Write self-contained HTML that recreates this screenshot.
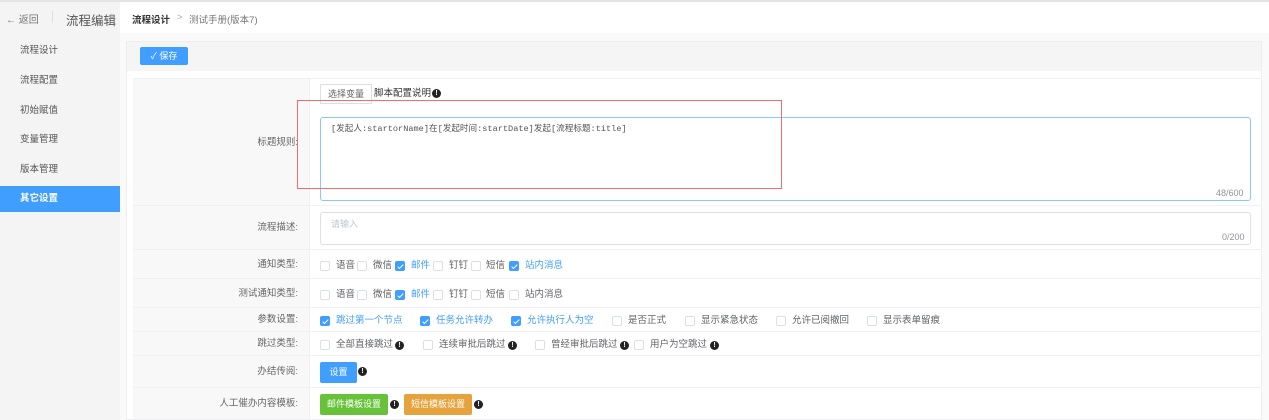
<!DOCTYPE html>
<html><head><meta charset="utf-8"><style>
*{box-sizing:border-box;margin:0;padding:0}
body{width:1269px;height:420px;overflow:hidden;background:#fff;font-family:"Liberation Sans","Noto Sans CJK SC",sans-serif;font-size:9.5px;color:#606266;position:relative}
.a{position:absolute}
.side{left:0;top:2px;width:120px;height:418px;background:#f4f4f4}
.nav{left:0;width:120px;height:26px;line-height:26px;padding-left:20px;color:#555;font-size:9.5px}
.lbl{left:133px;width:176px;text-align:right;padding-right:11px;font-size:9.5px;color:#666;background:#f8f8f8;border-bottom:1px solid #eef0f4}
.val{left:309px;width:953px;border-bottom:1px solid #eef0f4;border-left:1px solid #eef0f4}
.cb{width:10px;height:10px;border:1px solid #dcdfe6;border-radius:2px;background:#fff}
.cb.on{background:#409eff;border-color:#409eff}
.cb.on:after{content:"";position:absolute;left:3px;top:1px;width:2px;height:5px;border:solid #fff;border-width:0 1px 1px 0;transform:rotate(45deg)}
.t{font-size:9.5px;line-height:12px;color:#606266;white-space:nowrap}
.t.on{color:#409eff}
.ex{width:9px;height:9px;border-radius:50%;background:#222;color:#fff;font-size:7px;line-height:9px;text-align:center;font-weight:bold}
.btn{color:#fff;font-size:9px;text-align:center;border-radius:2px}
</style></head><body>
<div class="a" style="left:0;top:0;width:1269px;height:2px;background:#e4e4e4"></div>
<div class="a side"></div>
<div class="a" style="left:6px;top:11px;font-size:10px;color:#777">←&nbsp;返回</div>
<div class="a" style="left:52px;top:11px;width:1px;height:12px;background:#ddd"></div>
<div class="a" style="left:66px;top:10px;font-size:12.5px;color:#555">流程编辑</div>
<div class="a" style="left:120px;top:33px;width:1149px;height:387px;background:#fafafa"></div>
<div class="a" style="left:132px;top:12px;font-size:9.5px;color:#333;font-weight:bold">流程设计</div>
<div class="a" style="left:177px;top:12px;font-size:9.5px;color:#aaa">&gt;</div>
<div class="a" style="left:189px;top:12px;font-size:9.5px;color:#777">测试手册(版本7)</div>
<div class="a nav" style="top:38px">流程设计</div>
<div class="a nav" style="top:68px">流程配置</div>
<div class="a nav" style="top:98px">初始赋值</div>
<div class="a nav" style="top:127px">变量管理</div>
<div class="a nav" style="top:157px">版本管理</div>
<div class="a nav" style="top:186px;background:#409eff;color:#fff;font-weight:bold">其它设置</div>
<div class="a" style="left:126px;top:41px;width:1136px;height:379px;background:#fff;border:1px solid #eee"></div>
<div class="a" style="left:127px;top:42px;width:1134px;height:29px;background:#f5f5f5"></div>
<div class="a btn" style="left:140px;top:47px;width:48px;height:18px;line-height:18px;background:#409eff">✓ 保存</div>

<div class="a lbl" style="top:78px;height:128px;line-height:128px;border-top:1px solid #eef0f4">标题规则:</div>
<div class="a val" style="top:78px;height:128px;border-top:1px solid #eef0f4"></div>
<div class="a" style="left:320px;top:84px;width:52px;height:20px;border:1px solid #dcdfe6;font-size:9px;line-height:18px;text-align:center;background:#fff">选择变量</div>
<div class="a t" style="left:374px;top:88px;color:#333">脚本配置说明</div>
<div class="a ex" style="left:432px;top:89px">!</div>
<div class="a" style="left:320px;top:117px;width:931px;height:84px;border:1px solid #8cc5ff;border-radius:3px;background:#fff"></div>
<div class="a" style="left:331px;top:122px;font-family:'Liberation Mono','Noto Sans CJK SC',monospace;font-size:8.6px;color:#555">[发起人:startorName]在[发起时间:startDate]发起[流程标题:title]</div>
<div class="a" style="left:1216px;top:188px;font-size:9px;color:#909399">48/600</div>
<div class="a" style="left:297px;top:100px;width:485px;height:89px;border:1px solid #f56c6c"></div>

<div class="a lbl" style="top:206px;height:44px;line-height:44px">流程描述:</div>
<div class="a val" style="top:206px;height:44px"></div>
<div class="a" style="left:320px;top:212px;width:931px;height:33px;border:1px solid #dcdfe6;border-radius:3px"></div>
<div class="a" style="left:331px;top:217px;font-size:9px;color:#c0c4cc">请输入</div>
<div class="a" style="left:1222px;top:232px;font-size:9px;color:#909399">0/200</div>

<div class="a lbl" style="top:250px;height:29px;line-height:29px">通知类型:</div>
<div class="a val" style="top:250px;height:29px"></div>
<div class="a lbl" style="top:279px;height:29px;line-height:29px">测试通知类型:</div>
<div class="a val" style="top:279px;height:29px"></div>
<div class="a lbl" style="top:308px;height:24px;line-height:24px">参数设置:</div>
<div class="a val" style="top:308px;height:24px"></div>
<div class="a lbl" style="top:332px;height:24px;line-height:24px">跳过类型:</div>
<div class="a val" style="top:332px;height:24px"></div>
<div class="a lbl" style="top:356px;height:32px;line-height:32px">办结传阅:</div>
<div class="a val" style="top:356px;height:32px"></div>
<div class="a lbl" style="top:388px;height:32px;line-height:32px">人工催办内容模板:</div>
<div class="a val" style="top:388px;height:32px"></div>

<div class="a cb" style="left:320px;top:261px"></div><div class="a t" style="left:336px;top:260px">语音</div>
<div class="a cb" style="left:357px;top:261px"></div><div class="a t" style="left:373px;top:260px">微信</div>
<div class="a cb on" style="left:395px;top:261px"></div><div class="a t on" style="left:411px;top:260px">邮件</div>
<div class="a cb" style="left:433px;top:261px"></div><div class="a t" style="left:449px;top:260px">钉钉</div>
<div class="a cb" style="left:471px;top:261px"></div><div class="a t" style="left:486px;top:260px">短信</div>
<div class="a cb on" style="left:509px;top:261px"></div><div class="a t on" style="left:525px;top:260px">站内消息</div>

<div class="a cb" style="left:320px;top:290px"></div><div class="a t" style="left:336px;top:289px">语音</div>
<div class="a cb" style="left:357px;top:290px"></div><div class="a t" style="left:373px;top:289px">微信</div>
<div class="a cb on" style="left:395px;top:290px"></div><div class="a t on" style="left:411px;top:289px">邮件</div>
<div class="a cb" style="left:433px;top:290px"></div><div class="a t" style="left:449px;top:289px">钉钉</div>
<div class="a cb" style="left:471px;top:290px"></div><div class="a t" style="left:486px;top:289px">短信</div>
<div class="a cb" style="left:509px;top:290px"></div><div class="a t" style="left:525px;top:289px">站内消息</div>

<div class="a cb on" style="left:320px;top:316px"></div><div class="a t on" style="left:336px;top:315px">跳过第一个节点</div>
<div class="a cb on" style="left:420px;top:316px"></div><div class="a t on" style="left:436px;top:315px">任务允许转办</div>
<div class="a cb on" style="left:511px;top:316px"></div><div class="a t on" style="left:527px;top:315px">允许执行人为空</div>
<div class="a cb" style="left:612px;top:316px"></div><div class="a t" style="left:628px;top:315px">是否正式</div>
<div class="a cb" style="left:685px;top:316px"></div><div class="a t" style="left:701px;top:315px">显示紧急状态</div>
<div class="a cb" style="left:776px;top:316px"></div><div class="a t" style="left:792px;top:315px">允许已阅撤回</div>
<div class="a cb" style="left:867px;top:316px"></div><div class="a t" style="left:883px;top:315px">显示表单留痕</div>

<div class="a cb" style="left:320px;top:340px"></div><div class="a t" style="left:336px;top:339px">全部直接跳过</div><div class="a ex" style="left:395px;top:341px">!</div>
<div class="a cb" style="left:423px;top:340px"></div><div class="a t" style="left:439px;top:339px">连续审批后跳过</div><div class="a ex" style="left:508px;top:341px">!</div>
<div class="a cb" style="left:535px;top:340px"></div><div class="a t" style="left:551px;top:339px">曾经审批后跳过</div><div class="a ex" style="left:620px;top:341px">!</div>
<div class="a cb" style="left:634px;top:340px"></div><div class="a t" style="left:650px;top:339px">用户为空跳过</div><div class="a ex" style="left:710px;top:341px">!</div>

<div class="a btn" style="left:320px;top:362px;width:37px;height:21px;line-height:21px;background:#409eff">设置</div>
<div class="a ex" style="left:358px;top:367px">!</div>
<div class="a btn" style="left:320px;top:394px;width:68px;height:21px;line-height:21px;background:#67c23a">邮件模板设置</div>
<div class="a ex" style="left:390px;top:400px">!</div>
<div class="a btn" style="left:404px;top:394px;width:68px;height:21px;line-height:21px;background:#e6a23c">短信模板设置</div>
<div class="a ex" style="left:474px;top:400px">!</div>
</body></html>
